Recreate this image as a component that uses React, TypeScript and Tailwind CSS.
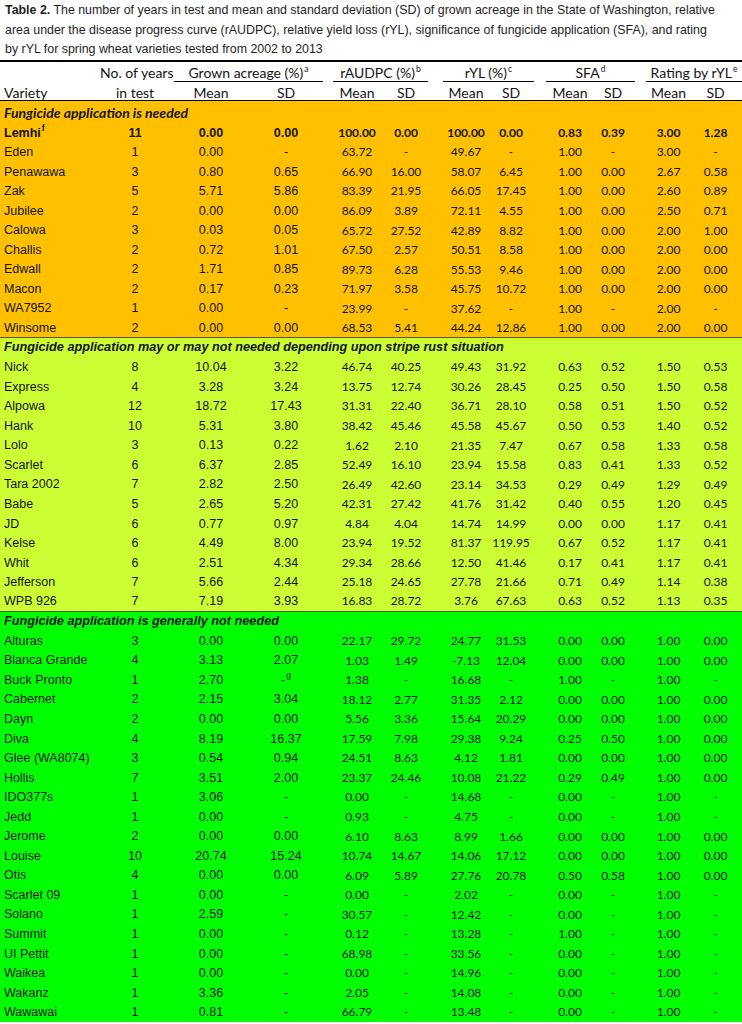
import React from "react";

// column slots: variety, years, grown mean/sd, rAUDPC mean/sd, rYL mean/sd, SFA mean/sd, rating mean/sd
const COLS = [
	"w-[114px] pl-[4px] text-left",
	"w-[42px] text-center",
	"ml-[34px] w-[42px] text-center",
	"ml-[33px] w-[42px] text-center",
	"ml-[29px] w-[42px] text-center",
	"ml-[7px] w-[42px] text-center",
	"ml-[18px] w-[42px] text-center",
	"ml-[3px] w-[42px] text-center",
	"ml-[17px] w-[42px] text-center",
	"ml-[1px] w-[42px] text-center",
	"ml-[13.5px] w-[42px] text-center",
	"ml-[5px] w-[42px] text-center",
];

const ARIAL = "font-['Liberation_Sans',Arial,sans-serif] text-[12.5px]";
const CALIBRI = "font-['Lato',sans-serif] text-[12px]";

type Row = string[];

const needed: Row[] = [
	["Eden", "1", "0.00", "-", "63.72", "-", "49.67", "-", "1.00", "-", "3.00", "-"],
	["Penawawa", "3", "0.80", "0.65", "66.90", "16.00", "58.07", "6.45", "1.00", "0.00", "2.67", "0.58"],
	["Zak", "5", "5.71", "5.86", "83.39", "21.95", "66.05", "17.45", "1.00", "0.00", "2.60", "0.89"],
	["Jubilee", "2", "0.00", "0.00", "86.09", "3.89", "72.11", "4.55", "1.00", "0.00", "2.50", "0.71"],
	["Calowa", "3", "0.03", "0.05", "65.72", "27.52", "42.89", "8.82", "1.00", "0.00", "2.00", "1.00"],
	["Challis", "2", "0.72", "1.01", "67.50", "2.57", "50.51", "8.58", "1.00", "0.00", "2.00", "0.00"],
	["Edwall", "2", "1.71", "0.85", "89.73", "6.28", "55.53", "9.46", "1.00", "0.00", "2.00", "0.00"],
	["Macon", "2", "0.17", "0.23", "71.97", "3.58", "45.75", "10.72", "1.00", "0.00", "2.00", "0.00"],
	["WA7952", "1", "0.00", "-", "23.99", "-", "37.62", "-", "1.00", "-", "2.00", "-"],
	["Winsome", "2", "0.00", "0.00", "68.53", "5.41", "44.24", "12.86", "1.00", "0.00", "2.00", "0.00"],
];

const maybe: Row[] = [
	["Nick", "8", "10.04", "3.22", "46.74", "40.25", "49.43", "31.92", "0.63", "0.52", "1.50", "0.53"],
	["Express", "4", "3.28", "3.24", "13.75", "12.74", "30.26", "28.45", "0.25", "0.50", "1.50", "0.58"],
	["Alpowa", "12", "18.72", "17.43", "31.31", "22.40", "36.71", "28.10", "0.58", "0.51", "1.50", "0.52"],
	["Hank", "10", "5.31", "3.80", "38.42", "45.46", "45.58", "45.67", "0.50", "0.53", "1.40", "0.52"],
	["Lolo", "3", "0.13", "0.22", "1.62", "2.10", "21.35", "7.47", "0.67", "0.58", "1.33", "0.58"],
	["Scarlet", "6", "6.37", "2.85", "52.49", "16.10", "23.94", "15.58", "0.83", "0.41", "1.33", "0.52"],
	["Tara 2002", "7", "2.82", "2.50", "26.49", "42.60", "23.14", "34.53", "0.29", "0.49", "1.29", "0.49"],
	["Babe", "5", "2.65", "5.20", "42.31", "27.42", "41.76", "31.42", "0.40", "0.55", "1.20", "0.45"],
	["JD", "6", "0.77", "0.97", "4.84", "4.04", "14.74", "14.99", "0.00", "0.00", "1.17", "0.41"],
	["Kelse", "6", "4.49", "8.00", "23.94", "19.52", "81.37", "119.95", "0.67", "0.52", "1.17", "0.41"],
	["Whit", "6", "2.51", "4.34", "29.34", "28.66", "12.50", "41.46", "0.17", "0.41", "1.17", "0.41"],
	["Jefferson", "7", "5.66", "2.44", "25.18", "24.65", "27.78", "21.66", "0.71", "0.49", "1.14", "0.38"],
	["WPB 926", "7", "7.19", "3.93", "16.83", "28.72", "3.76", "67.63", "0.63", "0.52", "1.13", "0.35"],
];

const notNeeded: Row[] = [
	["Alturas", "3", "0.00", "0.00", "22.17", "29.72", "24.77", "31.53", "0.00", "0.00", "1.00", "0.00"],
	["Blanca Grande", "4", "3.13", "2.07", "1.03", "1.49", "-7.13", "12.04", "0.00", "0.00", "1.00", "0.00"],
	["Buck Pronto", "1", "2.70", "-g", "1.38", "-", "16.68", "-", "1.00", "-", "1.00", "-"],
	["Cabernet", "2", "2.15", "3.04", "18.12", "2.77", "31.35", "2.12", "0.00", "0.00", "1.00", "0.00"],
	["Dayn", "2", "0.00", "0.00", "5.56", "3.36", "15.64", "20.29", "0.00", "0.00", "1.00", "0.00"],
	["Diva", "4", "8.19", "16.37", "17.59", "7.98", "29.38", "9.24", "0.25", "0.50", "1.00", "0.00"],
	["Glee (WA8074)", "3", "0.54", "0.94", "24.51", "8.63", "4.12", "1.81", "0.00", "0.00", "1.00", "0.00"],
	["Hollis", "7", "3.51", "2.00", "23.37", "24.46", "10.08", "21.22", "0.29", "0.49", "1.00", "0.00"],
	["IDO377s", "1", "3.06", "-", "0.00", "-", "14.68", "-", "0.00", "-", "1.00", "-"],
	["Jedd", "1", "0.00", "-", "0.93", "-", "4.75", "-", "0.00", "-", "1.00", "-"],
	["Jerome", "2", "0.00", "0.00", "6.10", "8.63", "8.99", "1.66", "0.00", "0.00", "1.00", "0.00"],
	["Louise", "10", "20.74", "15.24", "10.74", "14.67", "14.06", "17.12", "0.00", "0.00", "1.00", "0.00"],
	["Otis", "4", "0.00", "0.00", "6.09", "5.89", "27.76", "20.78", "0.50", "0.58", "1.00", "0.00"],
	["Scarlet 09", "1", "0.00", "-", "0.00", "-", "2.02", "-", "0.00", "-", "1.00", "-"],
	["Solano", "1", "2.59", "-", "30.57", "-", "12.42", "-", "0.00", "-", "1.00", "-"],
	["Summit", "1", "0.00", "-", "0.12", "-", "13.28", "-", "1.00", "-", "1.00", "-"],
	["UI Pettit", "1", "0.00", "-", "68.98", "-", "33.56", "-", "0.00", "-", "1.00", "-"],
	["Waikea", "1", "0.00", "-", "0.00", "-", "14.96", "-", "0.00", "-", "1.00", "-"],
	["Wakanz", "1", "3.36", "-", "2.05", "-", "14.08", "-", "0.00", "-", "1.00", "-"],
	["Wawawai", "1", "0.81", "-", "66.79", "-", "13.48", "-", "0.00", "-", "1.00", "-"],
];

const Sup = ({ children }: { children: React.ReactNode }) => (
	<sup className="relative -top-[6px] ml-[1px] text-[8.5px]">{children}</sup>
);

const DataRow = ({ row, bold = false, line = "" }: { row: Row; bold?: boolean; line?: string }) => (
	<div className={`flex h-[19.55px] items-center whitespace-nowrap leading-none text-[#141414] ${bold ? "font-bold" : ""} ${line}`}>
		{row.map((v, i) => {
			const font = i < 4 ? ARIAL : CALIBRI;
			let content: React.ReactNode = v;
			if (v === "-g") content = <>-<Sup>g</Sup></>;
			if (i === 0 && bold) content = <>{v}<Sup>f</Sup></>;
			return (
				<div key={i} className={`${COLS[i]} ${font}`}>
					{content}
				</div>
			);
		})}
	</div>
);

const SectionTitle = ({ text, calibri = false }: { text: string; calibri?: boolean }) => (
	<div
		className={`flex h-[19.55px] items-center whitespace-nowrap pl-[4px] font-bold italic leading-none text-[#141414] ${
			calibri ? "font-['Lato',sans-serif] text-[14px]" : "font-['Liberation_Sans',Arial,sans-serif] text-[12.7px]"
		}`}
	>
		{text}
	</div>
);

const Section = ({ bg, title, calibri, rows, line, lead }: { bg: string; title: string; calibri?: boolean; rows: Row[]; line?: string; lead?: React.ReactNode }) => (
	<div className={bg}>
		<SectionTitle text={title} calibri={calibri} />
		{lead}
		{rows.map((r, i) => (
			<DataRow key={r[0]} row={r} line={i === rows.length - 1 ? line : ""} />
		))}
	</div>
);

export default function App() {
	return (
		<div className="w-[742px] overflow-hidden bg-white text-black">
			<div className="whitespace-nowrap pt-[1px] pl-[5px] font-['Liberation_Sans',Arial,sans-serif] text-[12.4px] leading-[19.7px] text-[#1e1e1e]">
				<span className="font-bold">Table 2.</span> The number of years in test and mean and standard deviation (SD) of grown acreage in the State of Washington, relative
				<br />
				area under the disease progress curve (rAUDPC), relative yield loss (rYL), significance of fungicide application (SFA), and rating
				<br />
				by rYL for spring wheat varieties tested from 2002 to 2013
			</div>
			<div className="h-[2px] bg-black" />

			{/* header row 1 */}
			<div className="flex h-[20px] items-end whitespace-nowrap font-['Lato',sans-serif] text-[14px] leading-none text-[#141414]">
				<div className="w-[100px]" />
				<div className="w-[70px] pb-[2px] text-center">No. of years</div>
				<div className="ml-[4px] w-[149px] border-b border-black pb-[1px] text-center">
					Grown acreage (%)<Sup>a</Sup>
				</div>
				<div className="ml-[10px] w-[95px] border-b border-black pb-[1px] text-center">
					rAUDPC (%)<Sup>b</Sup>
				</div>
				<div className="ml-[15px] w-[91px] border-b border-black pb-[1px] text-center">
					rYL (%)<Sup>c</Sup>
				</div>
				<div className="ml-[12px] w-[89px] border-b border-black pb-[1px] text-center">
					SFA<Sup>d</Sup>
				</div>
				<div className="ml-[11px] w-[96px] border-b border-black pb-[1px] text-center">
					Rating by rYL<Sup>e</Sup>
				</div>
			</div>

			{/* header row 2 */}
			<div className="flex h-[18px] items-center whitespace-nowrap pt-[4px] font-['Lato',sans-serif] text-[14px] leading-none text-[#141414]">
				{["Variety", "in test", "Mean", "SD", "Mean", "SD", "Mean", "SD", "Mean", "SD", "Mean", "SD"].map((h, i) => (
					<div key={i} className={COLS[i]}>
						{h}
					</div>
				))}
			</div>
			<div className="h-[1px] bg-black" />

			<div className="bg-[#ffc000] pt-[2.4px]">
				<Section
					bg=""
					calibri
					title="Fungicide application is needed"
					rows={needed}
					line="border-b border-[#5c5230]"
					lead={<DataRow bold row={["Lemhi", "11", "0.00", "0.00", "100.00", "0.00", "100.00", "0.00", "0.83", "0.39", "3.00", "1.28"]} />}
				/>
			</div>
			<Section
				bg="bg-[#ccff33]"
				title="Fungicide application may or may not needed depending upon stripe rust situation"
				rows={maybe}
				line="border-b border-[#4b5a28]"
			/>
			<Section bg="bg-[#00ff00]" title="Fungicide application is generally not needed" rows={notNeeded} />
		</div>
	);
}
